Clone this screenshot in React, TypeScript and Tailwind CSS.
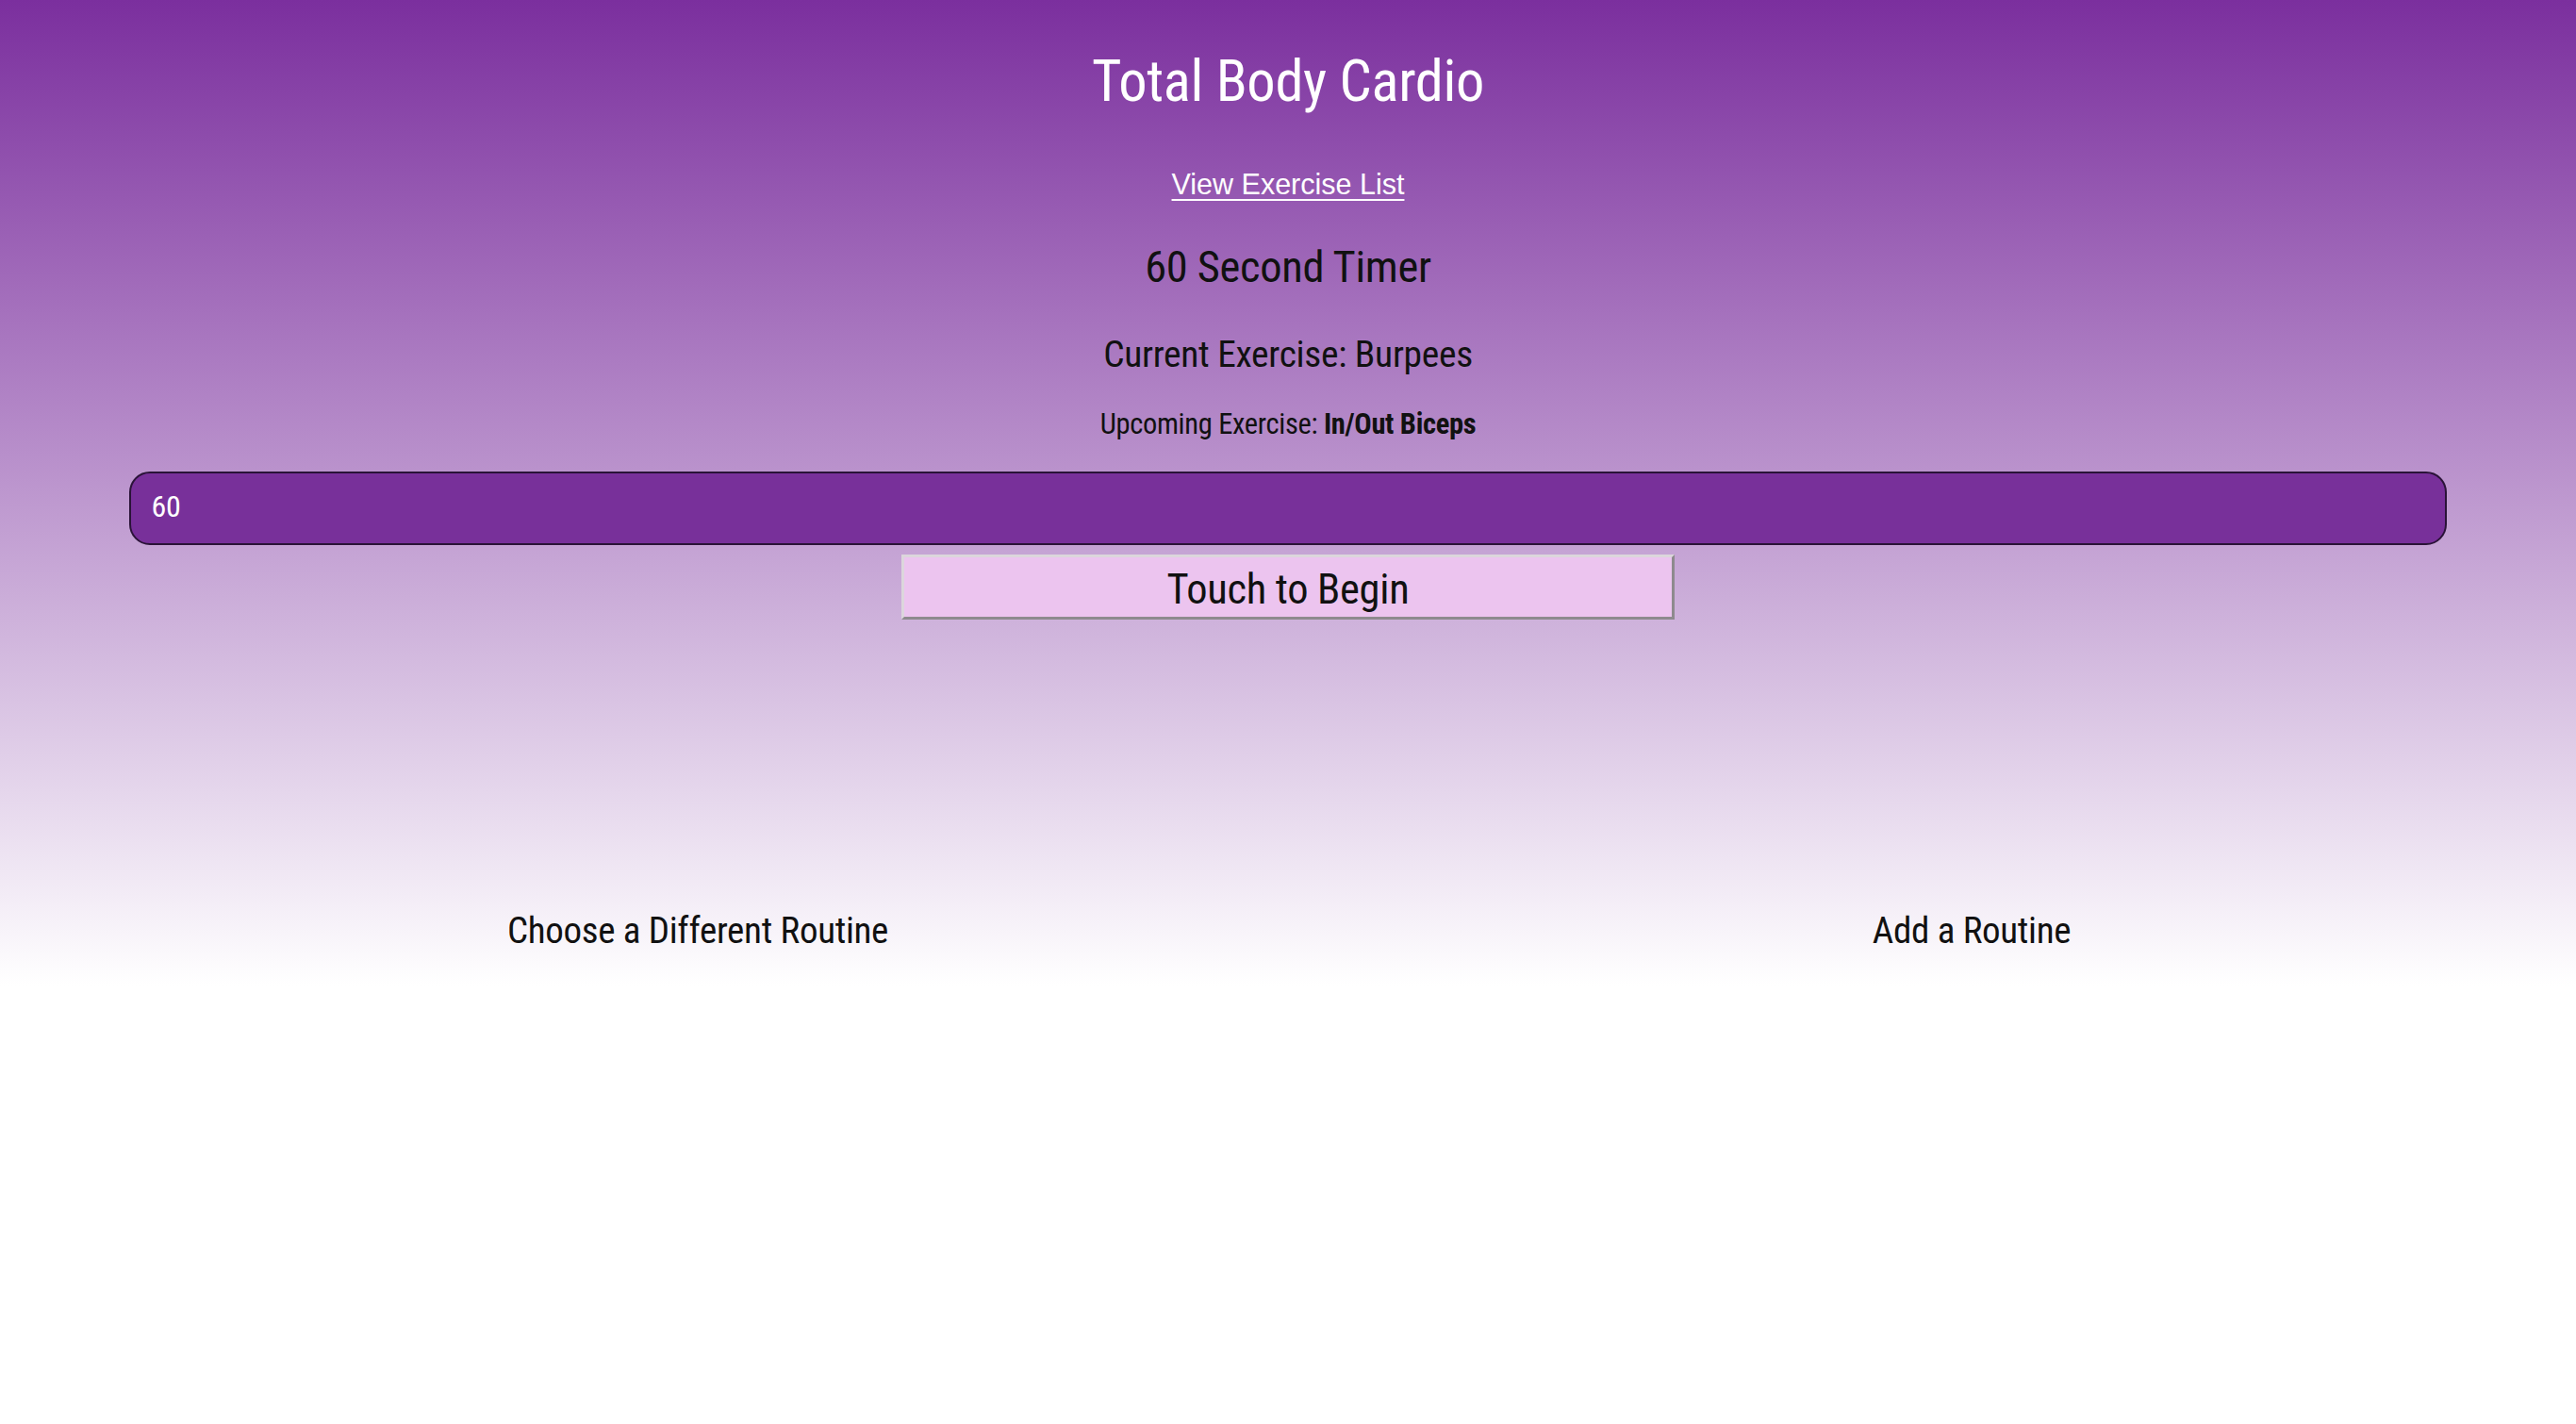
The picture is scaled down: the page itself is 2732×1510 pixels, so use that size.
import React from "react";

export default function App() {
  return (
    <div className="min-h-screen w-full bg-[linear-gradient(to_bottom,#7b2f9e_0px,#ffffff_1045px)] font-['Roboto_Condensed','Open_Sans',sans-serif] tracking-[-0.02em] text-[#111]">
      <div className="flex flex-col items-center">
        <h1 className="mt-[49px] text-center text-[60.5px] leading-[76px] text-white">
          Total Body Cardio
        </h1>
        <a
          href="#"
          className="mt-[52px] font-['Liberation_Sans',Arial,sans-serif] text-[30.5px] leading-[36px] tracking-normal text-white underline decoration-2 underline-offset-[5px]"
        >
          View Exercise List
        </a>
        <h2 className="mt-[40px] text-[46.5px] leading-[60px]">60 Second Timer</h2>
        <h3 className="mt-[38px] text-[39.5px] leading-[50px]">Current Exercise: Burpees</h3>
        <p className="mt-[30px] text-[30.5px] leading-[38px]">
          Upcoming Exercise: <span className="font-bold">In/Out Biceps</span>
        </p>
        <div className="mt-[31px] flex h-[78px] w-[90%] items-center rounded-[22px] border-2 border-[#2a1338] bg-[#78309a] pb-[4px] pl-[22px]">
          <span className="text-[32px] leading-[36px] text-white">60</span>
        </div>
        <button className="mt-[10px] h-[69px] w-[30%] border-[3px] border-t-[#dcd6dc] border-l-[#dcd6dc] border-r-[#8e8a8e] border-b-[#8e8a8e] bg-[#ecc4ef] pt-[4px] text-center text-[44.5px] leading-[58px] text-[#111]">
          Touch to Begin
        </button>
        <div className="mt-[305px] grid w-full grid-cols-[1480px_1222px]">
          <a href="#" className="text-center text-[39px] leading-[50px] text-[#111]">
            Choose a Different Routine
          </a>
          <a href="#" className="text-center text-[39px] leading-[50px] text-[#111]">
            Add a Routine
          </a>
        </div>
      </div>
    </div>
  );
}
